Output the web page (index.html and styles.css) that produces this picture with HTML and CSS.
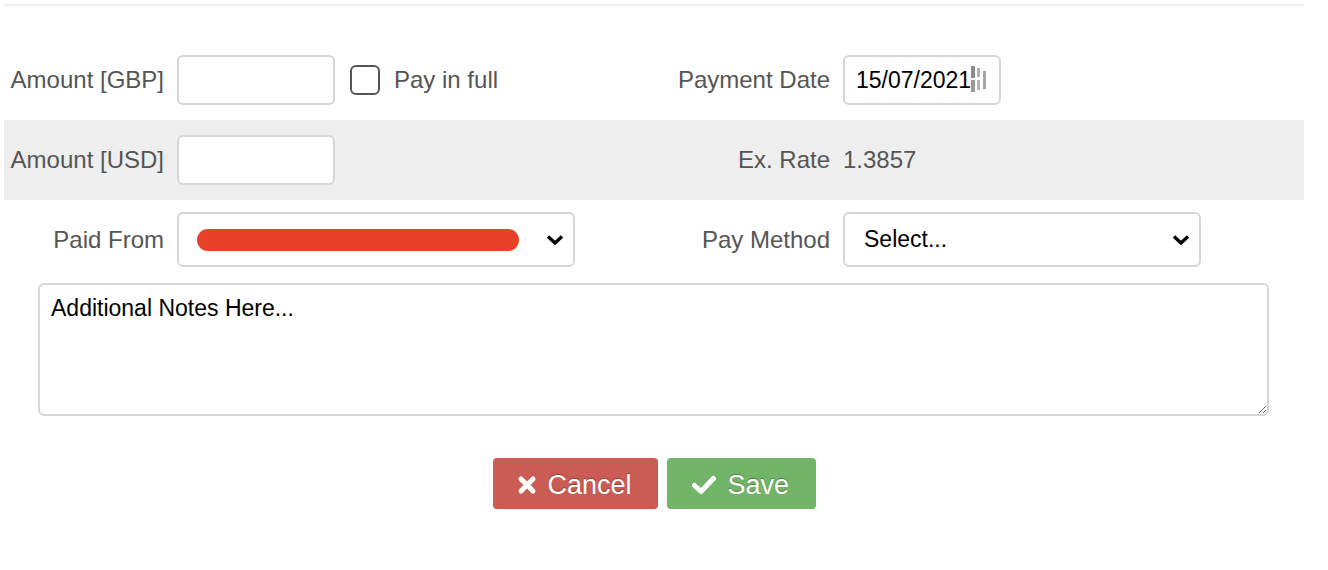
FILE: index.html
```html
<!DOCTYPE html>
<html lang="en">
<head>
<meta charset="UTF-8">
<title>Payment</title>
<link rel="stylesheet" href="styles.css">
</head>
<body>
<div class="container">
  <form class="payment-form">
    <div class="row row-first">
      <label class="label">Amount [GBP]</label>
      <div class="field">
        <input type="text" class="input input-small">
        <label class="check"><span class="check-box"></span>Pay in full</label>
      </div>
      <label class="label">Payment Date</label>
      <div class="field">
        <div class="date-wrap">
          <input type="text" class="input input-small" value="15/07/2021">
          <svg class="date-glitch" width="20" height="30" viewBox="0 0 20 30">
            <rect x="0" y="1" width="4" height="12" fill="#8e8e8e"/>
            <rect x="0" y="15" width="4" height="12" fill="#9a9a9a"/>
            <rect x="6" y="3" width="3" height="9" fill="#b4b4b4"/>
            <rect x="6" y="15" width="3" height="10" fill="#b4b4b4"/>
            <rect x="12" y="6" width="3" height="18" fill="#a6a6a6"/>
          </svg>
        </div>
      </div>
    </div>

    <div class="row row-grey">
      <label class="label">Amount [USD]</label>
      <div class="field">
        <input type="text" class="input input-small">
      </div>
      <label class="label">Ex. Rate</label>
      <div class="field value">1.3857</div>
    </div>

    <div class="row row-selects">
      <label class="label">Paid From</label>
      <div class="field">
        <div class="select select-from">
          <span class="redacted"></span>
          <svg class="chevron" width="18" height="12" viewBox="0 0 18 12"><path d="M2 2.5 L9 9 L16 2.5" fill="none" stroke="#000" stroke-width="3.4"/></svg>
        </div>
      </div>
      <label class="label">Pay Method</label>
      <div class="field">
        <div class="select select-method">
          <span class="select-text">Select...</span>
          <svg class="chevron" width="18" height="12" viewBox="0 0 18 12"><path d="M2 2.5 L9 9 L16 2.5" fill="none" stroke="#000" stroke-width="3.4"/></svg>
        </div>
      </div>
    </div>

    <div class="notes">
      <textarea class="notes-input">Additional Notes Here...</textarea>
    </div>

    <div class="actions">
      <button type="button" class="btn btn-cancel">
        <svg width="20" height="20" viewBox="0 0 20 20"><path d="M4 4 L16 16 M16 4 L4 16" stroke="#fff" stroke-width="5" stroke-linecap="round"/></svg>
        Cancel
      </button>
      <button type="button" class="btn btn-save">
        <svg width="26" height="20" viewBox="0 0 26 20"><path d="M3.5 10.5 L10 16.5 L22.5 3.5" fill="none" stroke="#fff" stroke-width="5" stroke-linecap="round" stroke-linejoin="round"/></svg>
        Save
      </button>
    </div>
  </form>
</div>
</body>
</html>
```

FILE: styles.css
```css
body {
  margin: 0;
  padding: 4px;
  font-family: "Liberation Sans", Arial, sans-serif;
  font-size: 24px;
  color: #555;
  background: #fff;
}
.container {
  width: 1300px;
  border-top: 2px solid #eeeeee;
}
.payment-form {
  padding-top: 34px;
}
.row {
  display: grid;
  grid-template-columns: 160px 480px 160px 1fr;
  column-gap: 13px;
  align-items: center;
  height: 80px;
}
.row-grey {
  background: #eeeeee;
}
.row-selects {
  height: 55px;
  margin-top: 12px;
}
.label {
  text-align: right;
  white-space: nowrap;
}
.field {
  display: flex;
  align-items: center;
}
.value {
  padding-left: 0;
}
.input {
  box-sizing: border-box;
  height: 50px;
  border: 2px solid #d6d6d6;
  border-radius: 6px;
  background: #fff;
  font-family: inherit;
  font-size: 23px;
  color: #000;
  padding: 0 11px;
  outline: none;
}
.input-small {
  width: 158px;
}
.check {
  display: flex;
  align-items: center;
  margin-left: 15px;
}
.check-box {
  box-sizing: border-box;
  width: 30px;
  height: 30px;
  border: 2px solid #555;
  border-radius: 6px;
  margin-right: 14px;
}
.date-wrap {
  position: relative;
}
.date-glitch {
  position: absolute;
  left: 128px;
  top: 10px;
}
.select {
  box-sizing: border-box;
  height: 55px;
  border: 2px solid #d6d6d6;
  border-radius: 6px;
  display: flex;
  align-items: center;
  justify-content: space-between;
  padding: 0 9px 0 18px;
  color: #000;
  font-size: 23px;
}
.select-from {
  width: 398px;
}
.select-method {
  width: 358px;
}
.select-text {
  padding-left: 1px;
}
.redacted {
  width: 322px;
  height: 22px;
  border-radius: 11px;
  background: #e84127;
}
.notes {
  margin-top: 16px;
  padding-left: 34px;
}
.notes-input {
  box-sizing: border-box;
  display: block;
  width: 1231px;
  height: 133px;
  border: 2px solid #d6d6d6;
  border-radius: 6px;
  padding: 10px 11px;
  font-family: inherit;
  font-size: 23px;
  color: #000;
  resize: both;
  outline: none;
}
.actions {
  display: flex;
  justify-content: center;
  gap: 9px;
  margin-top: 42px;
}
.btn {
  display: flex;
  align-items: center;
  gap: 11px;
  height: 51px;
  border: none;
  border-radius: 4px;
  color: #fff;
  font-family: inherit;
  font-size: 27px;
  text-shadow: 0 -1px 1px rgba(0, 0, 0, 0.3);
  padding: 3px 24px 0;
}
.btn-cancel {
  width: 165px;
  background: #ca5c54;
}
.btn-save {
  width: 149px;
  background: #72b568;
}
```
